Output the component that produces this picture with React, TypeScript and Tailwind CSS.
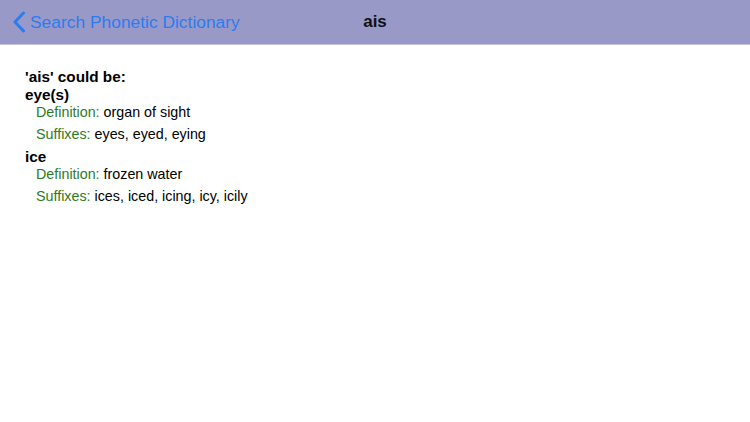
import React from "react";

const entries = [
  { word: "eye(s)", def: "organ of sight", suf: "eyes, eyed, eying" },
  { word: "ice", def: "frozen water", suf: "ices, iced, icing, icy, icily" },
];

export default function App() {
  return (
    <div className="w-[750px] h-[422px] bg-white overflow-hidden" style={{ fontFamily: '"Liberation Sans", Arial, sans-serif' }}>
      <div className="relative h-[45px] bg-[#9999c7] border-b border-[#c4c4dc] flex items-center">
        <div className="flex items-center pl-[12px] gap-[4px] text-[#2b7cf0] text-[17.4px]">
          <svg width="14" height="22" viewBox="0 0 14 22" fill="none">
            <path d="M11.5 2 L3 11 L11.5 20" stroke="#2b7cf0" strokeWidth="3" strokeLinecap="round" strokeLinejoin="round" />
          </svg>
          <span>Search Phonetic Dictionary</span>
        </div>
        <div className="absolute left-0 right-0 text-center text-[17px] font-bold text-[#111] pointer-events-none">ais</div>
      </div>
      <div className="pl-[25px] pt-[23px] text-black">
        <div className="text-[15.3px] font-bold leading-[18px]">'ais' could be:</div>
        {entries.map((e, i) => (
          <div key={i} className={i === 0 ? "mt-[1px]" : "mt-[6px]"}>
            <div className="text-[15.3px] font-bold leading-[16px]">{e.word}</div>
            <div className="pl-[11px] text-[14.3px] leading-[18px]">
              <span className="text-[#2f7a22]">Definition: </span>
              <span>{e.def}</span>
            </div>
            <div className="pl-[11px] mt-[4px] text-[14.3px] leading-[18px]">
              <span className="text-[#2f7a22]">Suffixes: </span>
              <span>{e.suf}</span>
            </div>
          </div>
        ))}
      </div>
    </div>
  );
}
